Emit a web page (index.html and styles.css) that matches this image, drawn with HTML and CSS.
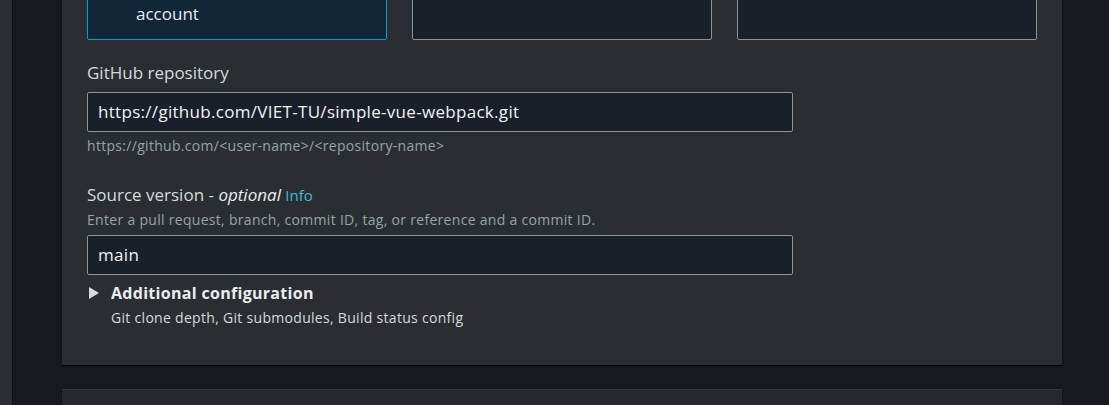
FILE: index.html
```html
<!DOCTYPE html>
<html lang="en">
<head>
<meta charset="utf-8">
<title>Source</title>
<link rel="stylesheet" href="styles.css">
</head>
<body>
<div class="layout">
  <nav class="rail"></nav>
  <main class="content">
    <section class="panel">
      <div class="tiles">
        <div class="tile tile-selected">
          <span class="tile-text">account</span>
        </div>
        <div class="tile"></div>
        <div class="tile"></div>
      </div>

      <div class="field field-repo">
        <label class="label">GitHub repository</label>
        <div class="input">https://github.com/VIET-TU/simple-vue-webpack.git</div>
        <div class="hint">https://github.com/&lt;user-name&gt;/&lt;repository-name&gt;</div>
      </div>

      <div class="field field-version">
        <label class="label">Source version - <i>optional</i> <a class="info">Info</a></label>
        <div class="desc">Enter a pull request, branch, commit ID, tag, or reference and a commit ID.</div>
        <div class="input">main</div>
      </div>

      <div class="expander">
        <svg class="caret" width="10" height="12" viewBox="0 0 10 12"><polygon points="0,0 10,6 0,12" fill="#d5dbdb"/></svg>
        <div class="expander-body">
          <div class="expander-title">Additional configuration</div>
          <div class="expander-sub">Git clone depth, Git submodules, Build status config</div>
        </div>
      </div>
    </section>
    <section class="panel panel-next"></section>
  </main>
</div>
</body>
</html>
```

FILE: styles.css
```css
html, body {
  margin: 0;
  padding: 0;
  background: #16191f;
  font-family: "Open Sans", "Noto Sans", sans-serif;
  color: #d5dbdb;
  height: 405px;
  overflow: hidden;
}

.layout {
  display: flex;
  height: 100%;
}

.rail {
  width: 12px;
  flex: none;
  background: #2a2e33;
  border-right: 1px solid #0f1115;
  height: 100%;
}

.content {
  flex: 1;
  padding-left: 49px;
  display: flex;
  flex-direction: column;
  gap: 24px;
  margin-top: -40px;
}

.panel {
  width: 1000px;
  background: #2a2e33;
  box-shadow: 0 1px 1px 0 #000;
  padding: 0 25px 37px;
  box-sizing: border-box;
}

.panel-next {
  background: #25282d;
  border-top: 1px solid #33373d;
  height: 60px;
}

.tiles {
  display: flex;
  gap: 25px;
}

.tile {
  width: 300px;
  height: 80px;
  box-sizing: border-box;
  background: #1a2029;
  border: 1px solid #879596;
  border-radius: 2px;
  padding: 42px 0 0 48px;
  font-size: 17px;
  line-height: 22px;
  color: #eaeded;
  overflow: hidden;
}

.tile-selected {
  background: #12263a;
  border-color: #00a1c9;
}

.field-repo {
  margin-top: 22px;
}

.field-version {
  margin-top: 28px;
}

.label {
  display: block;
  font-size: 17px;
  line-height: 22px;
  color: #d5dbdb;
}

.label i {
  font-style: italic;
  color: #eaeded;
}

.info {
  color: #44b9d6;
  font-size: 15px;
  text-decoration: none;
}

.field-repo .input {
  margin-top: 8px;
}

.input {
  width: 706px;
  height: 40px;
  box-sizing: border-box;
  background: #1a2029;
  border: 1px solid #879596;
  border-radius: 2px;
  padding: 0 10px;
  font-size: 17px;
  letter-spacing: 0.3px;
  line-height: 38px;
  color: #f2f3f3;
}

.hint {
  margin-top: 4px;
  font-size: 14px;
  letter-spacing: 0.3px;
  line-height: 20px;
  color: #95a5a6;
}

.desc {
  margin-top: 4px;
  font-size: 14px;
  letter-spacing: 0.3px;
  line-height: 20px;
  color: #95a5a6;
  margin-bottom: 5px;
}

.expander {
  display: flex;
  gap: 12px;
  margin-top: 7px;
  padding-left: 2px;
}

.caret {
  margin-top: 5px;
  flex: none;
}

.expander-title {
  font-size: 16px;
  font-weight: 700;
  letter-spacing: 0.3px;
  line-height: 22px;
  color: #eaeded;
}

.expander-sub {
  margin-top: 4px;
  font-size: 14px;
  letter-spacing: 0.3px;
  line-height: 20px;
  color: #d5dbdb;
}
```
